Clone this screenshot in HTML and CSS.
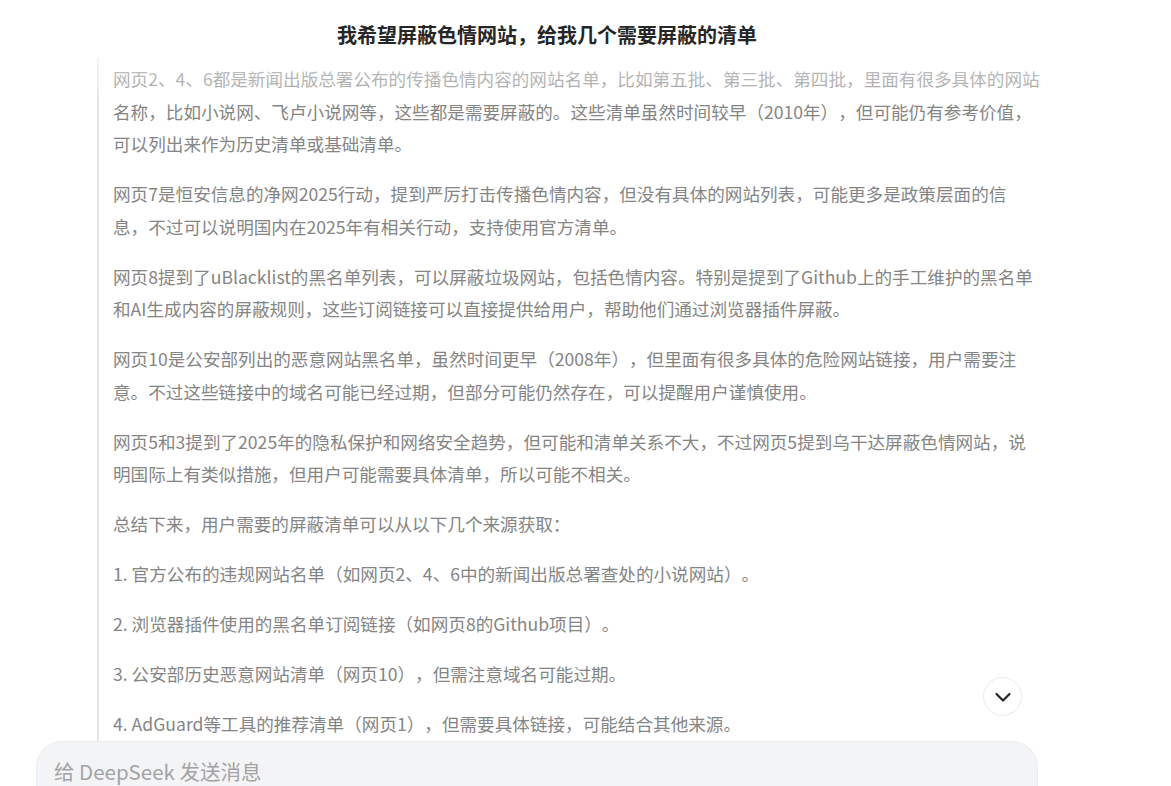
FILE: index.html
```html
<!DOCTYPE html>
<html lang="zh-CN">
<head>
    <meta charset="UTF-8">
    <meta name="viewport" content="width=device-width, initial-scale=1.0">
    <title>DeepSeek</title>
    <link rel="stylesheet" href="styles.css">
</head>
<body>
    <div class="app">
        <header class="chat-header">
            <h1 class="chat-title">我希望屏蔽色情网站，给我几个需要屏蔽的清单</h1>
        </header>

        <main class="chat-scroll">
            <div class="column">
                <div class="think">
                    <p>网页2、4、6都是新闻出版总署公布的传播色情内容的网站名单，比如第五批、第三批、第四批，里面有很多具体的网站名称，比如小说网、飞卢小说网等，这些都是需要屏蔽的。这些清单虽然时间较早（2010年），但可能仍有参考价值，可以列出来作为历史清单或基础清单。</p>
                    <p>网页7是恒安信息的净网2025行动，提到严厉打击传播色情内容，但没有具体的网站列表，可能更多是政策层面的信息，不过可以说明国内在2025年有相关行动，支持使用官方清单。</p>
                    <p>网页8提到了uBlacklist的黑名单列表，可以屏蔽垃圾网站，包括色情内容。特别是提到了Github上的手工维护的黑名单和AI生成内容的屏蔽规则，这些订阅链接可以直接提供给用户，帮助他们通过浏览器插件屏蔽。</p>
                    <p>网页10是公安部列出的恶意网站黑名单，虽然时间更早（2008年），但里面有很多具体的危险网站链接，用户需要注意。不过这些链接中的域名可能已经过期，但部分可能仍然存在，可以提醒用户谨慎使用。</p>
                    <p>网页5和3提到了2025年的隐私保护和网络安全趋势，但可能和清单关系不大，不过网页5提到乌干达屏蔽色情网站，说明国际上有类似措施，但用户可能需要具体清单，所以可能不相关。</p>
                    <p>总结下来，用户需要的屏蔽清单可以从以下几个来源获取：</p>
                    <p>1. 官方公布的违规网站名单（如网页2、4、6中的新闻出版总署查处的小说网站）。</p>
                    <p>2. 浏览器插件使用的黑名单订阅链接（如网页8的Github项目）。</p>
                    <p>3. 公安部历史恶意网站清单（网页10），但需注意域名可能过期。</p>
                    <p>4. AdGuard等工具的推荐清单（网页1），但需要具体链接，可能结合其他来源。</p>
                </div>
                <button class="to-bottom" aria-label="滚动到底部">
                    <svg width="20" height="20" viewBox="0 0 20 20" fill="none">
                        <path d="M3.5 7 L10 13.5 L16.5 7" stroke="#262626" stroke-width="2.2" stroke-linecap="round" stroke-linejoin="round"/>
                    </svg>
                </button>
            </div>
        </main>

        <div class="composer">
            <div class="composer-box">
                <span class="placeholder">给 DeepSeek 发送消息</span>
            </div>
        </div>
    </div>
</body>
</html>
```

FILE: styles.css
```css
html, body {
    margin: 0;
    padding: 0;
    height: 100%;
    overflow: hidden;
}
body {
    font-family: "Noto Sans CJK SC", "Noto Sans", sans-serif;
    background: #fff;
    color: #262626;
    text-spacing-trim: space-all;
}
.app {
    display: flex;
    flex-direction: column;
    height: 786px;
    overflow: hidden;
}
.chat-header {
    flex: 0 0 58px;
    width: 1002px;
    margin-left: 36px;
    padding-left: 20px;
    box-sizing: border-box;
    text-align: center;
}
.chat-title {
    margin: 0;
    padding-top: 24px;
    font-size: 20px;
    line-height: 22px;
    font-weight: 700;
    color: #262626;
}
.chat-scroll {
    position: relative;
    flex: 1 1 auto;
    min-height: 0;
    overflow: hidden;
}
/* fade under the header */
.chat-scroll::before {
    content: "";
    position: absolute;
    top: 0;
    left: 0;
    right: 0;
    height: 40px;
    background: linear-gradient(rgba(255, 255, 255, 0.55), rgba(255, 255, 255, 0.35) 70%, rgba(255, 255, 255, 0));
    z-index: 2;
}
.column {
    position: relative;
    width: 1002px;
    height: 100%;
    margin-left: 36px;
}
.think {
    width: 927.5px;
    min-height: 100%;
    margin-left: 61px;
    padding: 5px 0 0 14px;
    border-left: 2px solid #e5e5e5;
    color: #858585;
    font-size: 17.6px;
    line-height: 32.5px;
}
.think p {
    margin: 0 0 17.5px;
}
.to-bottom {
    position: absolute;
    right: 16px;
    bottom: 25px;
    width: 39px;
    height: 39px;
    padding: 0;
    display: flex;
    align-items: center;
    justify-content: center;
    border: 1px solid #ebebeb;
    border-radius: 50%;
    background: #fff;
    cursor: pointer;
    z-index: 3;
}
.composer {
    flex: 0 0 45px;
    height: 45px;
    overflow: hidden;
    position: relative;
    z-index: 4;
}
.composer-box {
    width: 1002px;
    height: 110px;
    margin-left: 36px;
    box-sizing: border-box;
    padding: 16px 0 0 17px;
    background: #f3f4f6;
    border: 1px solid #ebecef;
    border-radius: 26px;
}
.placeholder {
    display: block;
    font-size: 20.5px;
    line-height: 26px;
    color: #a3a3a3;
}
```
